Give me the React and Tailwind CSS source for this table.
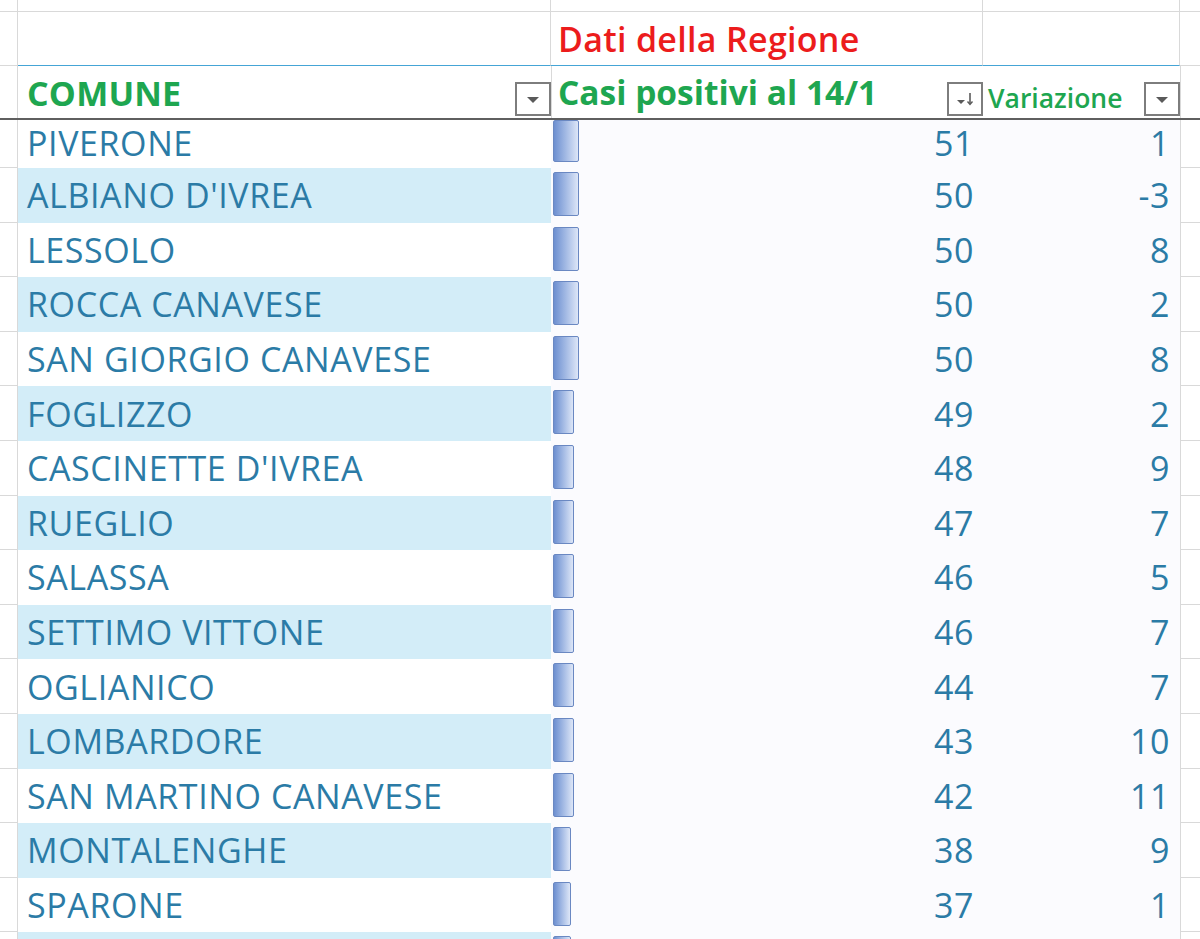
const rows = [
  ["PIVERONE", 51, 1, 26],
  ["ALBIANO D'IVREA", 50, -3, 26],
  ["LESSOLO", 50, 8, 26],
  ["ROCCA CANAVESE", 50, 2, 26],
  ["SAN GIORGIO CANAVESE", 50, 8, 26],
  ["FOGLIZZO", 49, 2, 21],
  ["CASCINETTE D'IVREA", 48, 9, 21],
  ["RUEGLIO", 47, 7, 21],
  ["SALASSA", 46, 5, 21],
  ["SETTIMO VITTONE", 46, 7, 21],
  ["OGLIANICO", 44, 7, 21],
  ["LOMBARDORE", 43, 10, 21],
  ["SAN MARTINO CANAVESE", 42, 11, 21],
  ["MONTALENGHE", 38, 9, 18],
  ["SPARONE", 37, 1, 18],
  ["", "", "", 18],
];

const cols = "grid grid-cols-[18px_533px_432px_197px_1fr]";
const cellText = "text-[34px] leading-none tracking-[0.6px] text-[#2b7ba6]";

const FilterButton = ({ sort }) => (
  <div className="flex h-[34px] w-[36px] shrink-0 items-center justify-center border-2 border-[#7d7d7d] bg-white">
    {sort ? (
      <svg width="22" height="18" viewBox="0 0 22 18">
        <path d="M3 10h8l-4 4z" fill="#5a5a5a" />
        <path d="M16 3v11" stroke="#5a5a5a" strokeWidth="1.6" />
        <path d="M13.5 11.5l2.5 3 2.5-3" stroke="#5a5a5a" strokeWidth="1.4" fill="none" />
      </svg>
    ) : (
      <svg width="14" height="10" viewBox="0 0 14 10">
        <path d="M1 3h12l-6 6z" fill="#5a5a5a" />
      </svg>
    )}
  </div>
);

// first row sits half under the frozen header line, so it is shorter
const DataRow = ({ name, casi, vari, bar, shaded, first }) => {
  const align = first ? "items-start pt-[6px]" : "items-center";
  return (
    <div className={`${cols} ${first ? "h-[48px]" : "h-[54.6px]"}`}>
      <div className="border-r border-b border-[#d9d9d9]" />
      <div className={`flex pl-[9px] ${align} ${cellText} ${shaded ? "bg-[#d3edf8]" : "bg-white"}`}>
        {name}
      </div>
      <div className="flex bg-[#fbfbfe] pl-[2px]">
        <div
          className={`${first ? "h-[42px]" : "mt-[4px] h-[44px]"} shrink-0 rounded-[2px] border-[1.5px] border-[#6a88c2] bg-gradient-to-r from-[#6d8fd0] to-[#dde6f7]`}
          style={{ width: bar }}
        />
        <div className={`flex flex-1 justify-end pr-[9px] ${align} ${cellText}`}>{casi}</div>
      </div>
      <div className={`flex justify-end bg-[#fbfbfe] pr-[10px] ${align} ${cellText}`}>{vari}</div>
      <div className="border-l border-b border-[#d9d9d9]" />
    </div>
  );
};

export default function App() {
  return (
    <div className="h-[939px] w-[1200px] overflow-hidden bg-white font-['Open_Sans',sans-serif]">
      <div className={`${cols} h-[12px] border-b border-[#d9d9d9]`}>
        <div className="border-r border-[#d9d9d9]" />
        <div className="border-r border-[#d9d9d9]" />
        <div className="border-r border-[#d9d9d9]" />
        <div className="border-r border-[#d9d9d9]" />
        <div />
      </div>

      <div className={`${cols} h-[54px]`}>
        <div className="border-r border-b border-[#d9d9d9]" />
        <div className="border-r border-[#d9d9d9] border-b border-b-[#45a5d6]" />
        <div className="flex items-center border-r border-[#d9d9d9] border-b border-b-[#45a5d6] pl-[7px] pt-[1px] text-[34px] leading-none font-semibold tracking-[0.3px] text-[#ec1c1c]">
          Dati della Regione
        </div>
        <div className="border-r border-[#d9d9d9] border-b border-b-[#45a5d6]" />
        <div className="border-b border-[#d9d9d9]" />
      </div>

      <div className={`${cols} h-[52px]`}>
        <div className="border-r border-[#d9d9d9]" />
        <div className="flex items-end justify-between pb-[2px] pl-[9px]">
          <span className="self-center pt-[4px] text-[34px] leading-none font-bold tracking-[0.2px] text-[#1ea650]">
            COMUNE
          </span>
          <FilterButton />
        </div>
        <div className="flex items-end justify-between border-l border-[#d9d9d9] pb-[2px] pl-[6px]">
          <span className="self-center pt-[4px] text-[33.5px] leading-none font-bold text-[#1ea650]">
            Casi positivi al 14/1
          </span>
          <FilterButton sort />
        </div>
        <div className="flex items-end justify-between pb-[2px] pl-[5px]">
          <span className="self-center pt-[15px] text-[26.5px] leading-none font-semibold text-[#1ea650]">
            Variazione
          </span>
          <FilterButton />
        </div>
        <div className="border-l border-[#d9d9d9]" />
      </div>

      <div className="h-[2px] bg-[#5f5f5f]" />

      <div className="h-[819px] overflow-hidden">
        {rows.map(([name, casi, vari, bar], i) => (
          <DataRow
            key={i}
            name={name}
            casi={casi}
            vari={vari}
            bar={bar}
            shaded={i % 2 === 1}
            first={i === 0}
          />
        ))}
      </div>
    </div>
  );
}
